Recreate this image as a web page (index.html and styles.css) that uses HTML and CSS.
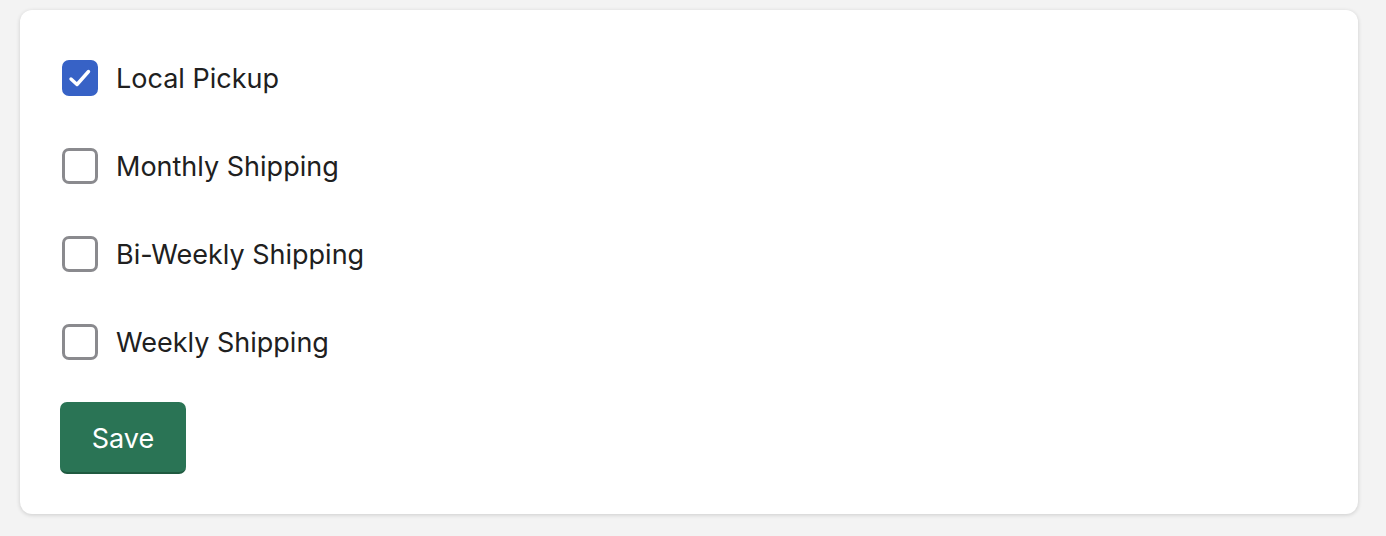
FILE: index.html
```html
<!DOCTYPE html>
<html>
<head>
<meta charset="utf-8">
<link rel="stylesheet" href="styles.css">
</head>
<body>
<div class="card">
  <div class="options">
    <label class="row"><span class="box checked"><svg viewBox="0 0 36 36" width="36" height="36"><path d="M9 19l6 5.5 11.5-13" fill="none" stroke="#fff" stroke-width="3.4" stroke-linecap="round" stroke-linejoin="round"/></svg></span><span class="label">Local Pickup</span></label>
    <label class="row"><span class="box"></span><span class="label">Monthly Shipping</span></label>
    <label class="row"><span class="box"></span><span class="label">Bi-Weekly Shipping</span></label>
    <label class="row"><span class="box"></span><span class="label">Weekly Shipping</span></label>
  </div>
  <button class="save">Save</button>
</div>
</body>
</html>
```
FILE: styles.css
```css
html, body { margin: 0; padding: 0; }
body {
  background: #f3f3f3;
  font-family: Inter, "Noto Sans", sans-serif;
  padding: 10px 28px 22px 20px;
}
.card {
  background: #fff;
  border-radius: 12px;
  box-shadow: 0 1px 4px rgba(0,0,0,0.16);
  padding: 50px 40px 40px 42px;
  display: flex;
  flex-direction: column;
  align-items: flex-start;
  gap: 42px;
}
.options {
  display: flex;
  flex-direction: column;
  gap: 52px;
}
.row {
  display: flex;
  align-items: center;
  height: 36px;
  gap: 18px;
}
.box {
  box-sizing: border-box;
  width: 36px;
  height: 36px;
  border: 3px solid #8a8a8e;
  border-radius: 7px;
  position: relative;
  flex: none;
}
.box.checked {
  background: #3762c6;
  border-color: #3762c6;
}
.box svg {
  position: absolute;
  left: -3px;
  top: -3px;
}
.label {
  font-size: 27px;
  color: #202020;
}
.save {
  margin-left: -2px;
  width: 126px;
  height: 72px;
  background: #2a7455;
  color: #fff;
  border: none;
  border-bottom: 2px solid #1f5a40;
  border-radius: 7px;
  font-family: Inter, "Noto Sans", sans-serif;
  font-size: 27px;
  padding: 2px 0 0;
}
```
